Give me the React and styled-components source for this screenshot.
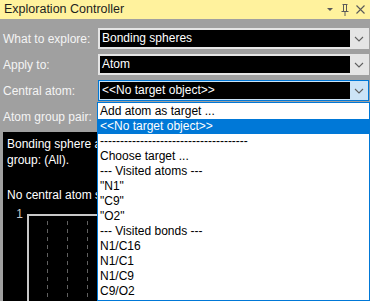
import React from 'react';
import styled, {createGlobalStyle} from 'styled-components';

const GlobalStyle = createGlobalStyle`
	html, body {
		margin: 0;
		padding: 0;
		background: #a0a0a0;
		font-family: "Liberation Sans", Arial, sans-serif;
		font-size: 12px;
	}
`;

const fields = [
	{label: 'What to explore:', value: 'Bonding spheres'},
	{label: 'Apply to:', value: 'Atom'},
	{label: 'Central atom:', value: '<<No target object>>', focused: true},
	{label: 'Atom group pair:', value: null},
];

const options = [
	'Add atom as target ...',
	'<<No target object>>',
	'-------------------------------------',
	'Choose target ...',
	'--- Visited atoms ---',
	'"N1"',
	'"C9"',
	'"O2"',
	'--- Visited bonds ---',
	'N1/C16',
	'N1/C1',
	'N1/C9',
	'C9/O2',
];

function Chevron() {
	return (
		<svg width="10" height="6" viewBox="0 0 10 6">
			<polyline points="1,1 5,5 9,1" fill="none" stroke="#606060" strokeWidth="1.1" />
		</svg>
	);
}

function ComboBox({value, focused}) {
	return (
		<Combo focused={focused}>
			<ComboField>{value}</ComboField>
			<ComboButton focused={focused}>
				<Chevron />
			</ComboButton>
		</Combo>
	);
}

export default function App() {
	return (
		<Window>
			<GlobalStyle />
			<TitleBar>
				<Title>Exploration Controller</Title>
				<TitleIcons>
					<svg width="8" height="5" viewBox="0 0 8 5">
						<polygon points="1,1 7,1 4,4" fill="#5a5a5a" />
					</svg>
					<svg width="8" height="12" viewBox="0 0 8 12">
						<path d="M1.5 0.5 H6.5 M2.5 0.5 V7 M5.5 0.5 V7 M0.5 7.5 H7.5 M4 7.5 V12" fill="none" stroke="#5a5a5a" strokeWidth="1" />
					</svg>
					<svg width="9" height="9" viewBox="0 0 9 9">
						<path d="M0.5 0.5 L8.5 8.5 M8.5 0.5 L0.5 8.5" stroke="#5a5a5a" strokeWidth="1.1" />
					</svg>
				</TitleIcons>
			</TitleBar>
			<Content>
				<Form>
					{fields.map(f => (
						<React.Fragment key={f.label}>
							<Label>{f.label}</Label>
							{f.value !== null ? <ComboBox value={f.value} focused={f.focused} /> : <span />}
						</React.Fragment>
					))}
				</Form>
				<Panel>
					<PanelText>
						Bonding sphere analysis of the central atom and atom
						<br />
						group: (All).
					</PanelText>
					<PanelNote>No central atom selected.</PanelNote>
					<Chart>
						<AxisLabel>1</AxisLabel>
						<Plot>
							<GridLine />
							<GridLine />
							<GridLine />
							<GridLine />
						</Plot>
					</Chart>
				</Panel>
			</Content>
			<DropList>
				{options.map((o, i) => (
					<DropItem key={i} selected={i === 1}>{o}</DropItem>
				))}
			</DropList>
		</Window>
	);
}

const Window = styled.div`
	position: relative;
	width: 370px;
	height: 301px;
	overflow: hidden;
	background: #a0a0a0;
`;

const TitleBar = styled.div`
	display: flex;
	align-items: center;
	justify-content: space-between;
	height: 19px;
	padding: 0 5px 0 4px;
	background: #fff29d;
	color: #1e1e1e;
`;

const Title = styled.div`
	font-size: 12.5px;
	line-height: 19px;
`;

const TitleIcons = styled.div`
	display: flex;
	align-items: center;
	gap: 7px;
`;

const Content = styled.div`
	padding: 9px 1px 0 3px;
`;

const Form = styled.div`
	display: grid;
	grid-template-columns: 95px 1fr;
	grid-auto-rows: 21px;
	row-gap: 5px;
	align-items: center;
`;

const Label = styled.div`
	color: #f4f4f4;
	white-space: nowrap;
`;

const Combo = styled.div`
	display: flex;
	height: 21px;
	box-sizing: border-box;
	padding: ${p => (p.focused ? '1px' : '2px')};
	background: ${p => (p.focused ? '#cce4f7' : '#e5e5e5')};
	border: ${p => (p.focused ? '1px solid #0078d7' : 'none')};
`;

const ComboField = styled.div`
	flex: 1;
	background: #000;
	color: #fff;
	padding-left: 2px;
	line-height: 17px;
	white-space: nowrap;
	overflow: hidden;
`;

const ComboButton = styled.div`
	width: 17px;
	display: flex;
	align-items: center;
	justify-content: center;
`;

const Panel = styled.div`
	margin-top: 5px;
	height: 170px;
	background: #000;
	color: #fff;
	padding: 4px 4px 0;
	line-height: 16px;
`;

const PanelText = styled.div`
	white-space: nowrap;
`;

const PanelNote = styled.div`
	margin-top: 19px;
`;

const Chart = styled.div`
	display: grid;
	grid-template-columns: 20px 1fr;
	margin-top: 3px;
	height: 100px;
`;

const AxisLabel = styled.div`
	color: #c8c8c8;
	text-align: right;
	padding-right: 4px;
`;

const Plot = styled.div`
	margin-top: 8px;
	display: flex;
	gap: 19px;
	padding: 5px 0 0 18px;
	border-top: 2px solid #c8c8c8;
	border-left: 2px solid #c8c8c8;
`;

const GridLine = styled.div`
	width: 1px;
	background: repeating-linear-gradient(to bottom, #606060 0 4px, transparent 4px 8px);
`;

const DropList = styled.div`
	position: absolute;
	top: 102px;
	left: 97px;
	width: 273px;
	height: 199px;
	box-sizing: border-box;
	border: 1px solid #0078d7;
	background: #fff;
	padding-top: 1px;
`;

const DropItem = styled.div`
	height: 15px;
	line-height: 15px;
	padding-left: 2px;
	white-space: nowrap;
	color: ${p => (p.selected ? '#fff' : '#000')};
	background: ${p => (p.selected ? '#0078d7' : 'transparent')};
`;
